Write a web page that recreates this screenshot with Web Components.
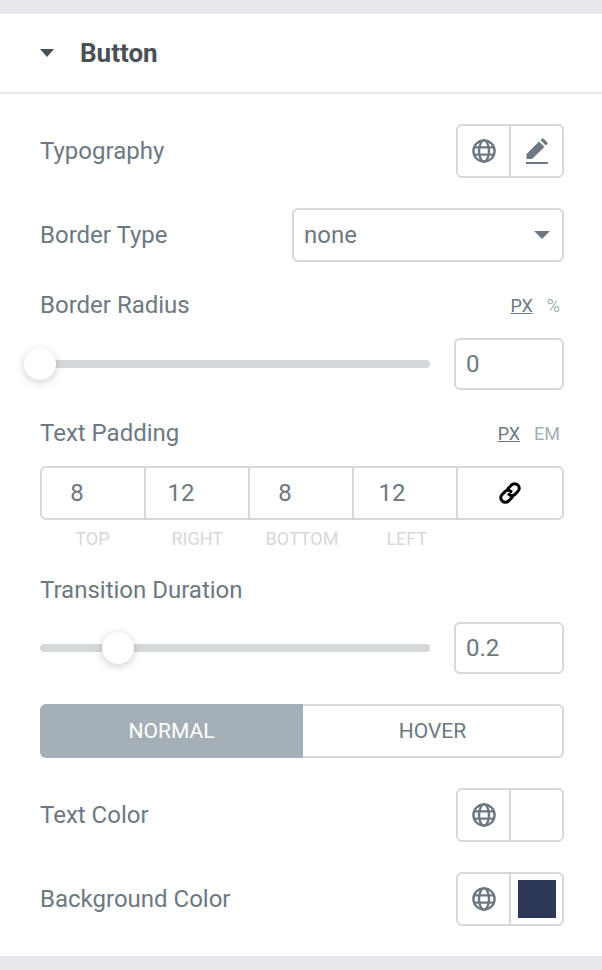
<!DOCTYPE html>
<html>
<head>
<meta charset="utf-8">
<title>Button</title>
<style>
  html, body { margin: 0; padding: 0; background: #e6e8eb; }
  body { font-family: Roboto, "Liberation Sans", sans-serif; color: #6d7882; }
</style>
</head>
<body>
<panel-section heading="Button">
  <control-row label="Typography"><icon-group icon="pencil"></icon-group></control-row>
  <control-row label="Border Type" style="margin-top:30px"><select-box value="none"></select-box></control-row>
  <slider-control label="Border Radius" units="PX,%" value="0" pos="0" style="margin-top:29px"></slider-control>
  <dimensions-control label="Text Padding" units="PX,EM" style="margin-top:29px"></dimensions-control>
  <slider-control label="Transition Duration" value="0.2" pos="78" gap="18" style="margin-top:27px"></slider-control>
  <state-tabs style="margin-top:30px"></state-tabs>
  <control-row label="Text Color" style="margin-top:30px"><icon-group></icon-group></control-row>
  <control-row label="Background Color" style="margin-top:30px"><icon-group swatch="#2d3858"></icon-group></control-row>
</panel-section>

<script>
const GLOBE = `<svg width="24" height="24" viewBox="0 0 24 24" fill="none" stroke="currentColor" stroke-width="2.4">
  <circle cx="12" cy="12" r="10.6"/>
  <ellipse cx="12" cy="12" rx="5" ry="10.6"/>
  <path d="M2.2 8.4h19.6M2.2 15.6h19.6"/>
</svg>`;

const PENCIL = `<svg width="24" height="26" viewBox="0 0 24 26" fill="currentColor">
  <path d="M1 26h22v-2H1z"/>
  <path d="M1.5 21v-5L14 3.6 19.4 9 7 21z"/>
  <path d="M15.6 2.2l1.4-1.4a1.3 1.3 0 0 1 1.8 0l3.4 3.4a1.3 1.3 0 0 1 0 1.8l-1.4 1.4z"/>
</svg>`;

const LINK = `<svg width="24" height="24" viewBox="0 0 24 24" fill="none" stroke="#000" stroke-width="3" stroke-linecap="round">
  <path d="M10 7.5l3.6-3.6a4.2 4.2 0 0 1 6 0l.4.4a4.2 4.2 0 0 1 0 6L17 13.4a4.2 4.2 0 0 1-6 0"/>
  <path d="M14 16.5l-3.6 3.6a4.2 4.2 0 0 1-6 0l-.4-.4a4.2 4.2 0 0 1 0-6L7 10.6a4.2 4.2 0 0 1 6 0"/>
</svg>`;

class PanelSection extends HTMLElement {
  constructor() {
    super();
    this.attachShadow({ mode: 'open' });
    this.shadowRoot.innerHTML = `
      <style>
        :host { display: block; margin: 14px 0; background: #fff; }
        .head {
          display: flex;
          align-items: center;
          height: 78px;
          padding-left: 40px;
          border-bottom: 2px solid #e6e8eb;
        }
        .caret {
          width: 0;
          height: 0;
          margin-right: 26px;
          border-left: 7.5px solid transparent;
          border-right: 7.5px solid transparent;
          border-top: 8px solid #495157;
        }
        .title { font-size: 26px; font-weight: 700; color: #495157; }
        .body { padding: 30px 38px 30px 40px; }
      </style>
      <div class="head"><span class="caret"></span><span class="title">${this.getAttribute('heading')}</span></div>
      <div class="body"><slot></slot></div>
    `;
  }
}

class ControlRow extends HTMLElement {
  constructor() {
    super();
    this.attachShadow({ mode: 'open' });
    this.shadowRoot.innerHTML = `
      <style>
        :host { display: flex; align-items: center; justify-content: space-between; height: 54px; }
        .label { font-size: 24px; color: #6d7882; }
      </style>
      <span class="label">${this.getAttribute('label')}</span>
      <slot></slot>
    `;
  }
}

class IconGroup extends HTMLElement {
  constructor() {
    super();
    this.attachShadow({ mode: 'open' });
    const swatch = this.getAttribute('swatch');
    let right = '';
    if (this.getAttribute('icon') === 'pencil') right = PENCIL;
    if (swatch) right = `<span class="swatch" style="background:${swatch}"></span>`;
    this.shadowRoot.innerHTML = `
      <style>
        :host {
          display: flex;
          box-sizing: border-box;
          width: 108px;
          height: 54px;
          border: 2px solid #d5d8dc;
          border-radius: 6px;
          color: #6d7882;
        }
        .cell { display: flex; flex: 1; align-items: center; justify-content: center; }
        .cell + .cell { border-left: 2px solid #d5d8dc; }
        .swatch { width: 38px; height: 38px; }
      </style>
      <div class="cell">${GLOBE}</div>
      <div class="cell">${right}</div>
    `;
  }
}

class SelectBox extends HTMLElement {
  constructor() {
    super();
    this.attachShadow({ mode: 'open' });
    this.shadowRoot.innerHTML = `
      <style>
        :host {
          display: flex;
          align-items: center;
          justify-content: space-between;
          box-sizing: border-box;
          width: 272px;
          height: 54px;
          padding: 0 12px 0 10px;
          border: 2px solid #d5d8dc;
          border-radius: 6px;
          font-size: 24px;
          color: #6d7882;
        }
        .caret {
          width: 0;
          height: 0;
          border-left: 8px solid transparent;
          border-right: 8px solid transparent;
          border-top: 8px solid #6d7882;
        }
      </style>
      <span>${this.getAttribute('value')}</span><span class="caret"></span>
    `;
  }
}

class UnitLabel extends HTMLElement {
  constructor() {
    super();
    this.attachShadow({ mode: 'open' });
    const units = (this.getAttribute('units') || '').split(',').filter(Boolean);
    this.shadowRoot.innerHTML = `
      <style>
        :host {
          display: flex;
          align-items: center;
          justify-content: space-between;
          height: 28px;
        }
        .label { font-size: 24px; color: #6d7882; }
        .units { display: flex; gap: 14px; padding-right: 4px; font-size: 18px; color: #a4afb7; }
        .units span:first-child { color: #6d7882; text-decoration: underline; }
      </style>
      <span class="label">${this.getAttribute('label')}</span>
      <div class="units">${units.map((u) => `<span>${u}</span>`).join('')}</div>
    `;
  }
}

class SliderControl extends HTMLElement {
  constructor() {
    super();
    this.attachShadow({ mode: 'open' });
    const units = this.getAttribute('units') || '';
    const gap = this.getAttribute('gap') || 19;
    this.shadowRoot.innerHTML = `
      <style>
        :host { display: block; }
        .row { display: flex; align-items: center; justify-content: space-between; margin-top: ${gap}px; }
        .track { position: relative; width: 390px; height: 8px; border-radius: 4px; background: #d5d8dc; }
        .thumb {
          position: absolute;
          top: -12px;
          width: 32px;
          height: 32px;
          margin-left: -16px;
          border-radius: 50%;
          background: #fff;
          box-shadow: 0 2px 8px rgba(0,0,0,0.2);
        }
        .input {
          display: flex;
          align-items: center;
          box-sizing: border-box;
          width: 110px;
          height: 52px;
          padding-left: 10px;
          border: 2px solid #d5d8dc;
          border-radius: 6px;
          font-size: 24px;
          color: #6d7882;
        }
      </style>
      <unit-label label="${this.getAttribute('label')}" units="${units}"></unit-label>
      <div class="row">
        <div class="track"><div class="thumb" style="left:${this.getAttribute('pos')}px"></div></div>
        <div class="input">${this.getAttribute('value')}</div>
      </div>
    `;
  }
}

class DimensionsControl extends HTMLElement {
  constructor() {
    super();
    this.attachShadow({ mode: 'open' });
    const sides = [['8', 'TOP'], ['12', 'RIGHT'], ['8', 'BOTTOM'], ['12', 'LEFT']];
    this.shadowRoot.innerHTML = `
      <style>
        :host { display: block; }
        .grid { display: grid; grid-template-columns: repeat(5, 1fr); margin-top: 19px; }
        .box {
          display: grid;
          grid-template-columns: repeat(5, 1fr);
          grid-column: 1 / -1;
          box-sizing: border-box;
          height: 54px;
          border: 2px solid #d5d8dc;
          border-radius: 6px;
        }
        .cell {
          display: flex;
          align-items: center;
          justify-content: center;
          padding-right: 32px;
          border-right: 2px solid #d5d8dc;
          font-size: 24px;
          color: #6d7882;
        }
        .cell:nth-child(4) { padding-right: 26px; }
        .cell.link { padding: 0; border-right: 0; }
        .cap { margin-top: 8px; font-size: 18px; line-height: 21px; text-align: center; color: #d5d8dc; }
      </style>
      <unit-label label="${this.getAttribute('label')}" units="${this.getAttribute('units')}"></unit-label>
      <div class="grid">
        <div class="box">
          ${sides.map(([v]) => `<div class="cell">${v}</div>`).join('')}
          <div class="cell link">${LINK}</div>
        </div>
        ${sides.map(([, c]) => `<div class="cap">${c}</div>`).join('')}
      </div>
    `;
  }
}

class StateTabs extends HTMLElement {
  constructor() {
    super();
    this.attachShadow({ mode: 'open' });
    this.shadowRoot.innerHTML = `
      <style>
        :host { display: flex; height: 54px; font-size: 21px; }
        .tab { display: flex; align-items: center; justify-content: center; box-sizing: border-box; }
        .on { width: 263px; background: #a4afb7; color: #fff; border-radius: 6px 0 0 6px; }
        .off {
          flex: 1;
          border: 2px solid #d5d8dc;
          border-left: 0;
          border-radius: 0 6px 6px 0;
          color: #6d7882;
        }
      </style>
      <div class="tab on">NORMAL</div>
      <div class="tab off">HOVER</div>
    `;
  }
}

customElements.define('panel-section', PanelSection);
customElements.define('control-row', ControlRow);
customElements.define('icon-group', IconGroup);
customElements.define('select-box', SelectBox);
customElements.define('unit-label', UnitLabel);
customElements.define('slider-control', SliderControl);
customElements.define('dimensions-control', DimensionsControl);
customElements.define('state-tabs', StateTabs);
</script>
</body>
</html>
